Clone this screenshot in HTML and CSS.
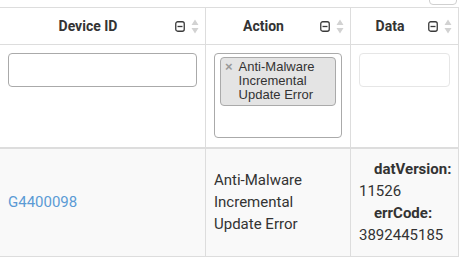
FILE: index.html
```html
<!DOCTYPE html>
<html lang="en">
<head>
  <meta charset="UTF-8">
  <title>Device events</title>
  <link rel="stylesheet" href="styles.css">
</head>
<body>
  <div class="toolbar">
    <button class="tool-btn" type="button"></button>
  </div>
  <table class="grid">
    <colgroup>
      <col class="col-device">
      <col class="col-action">
      <col class="col-data">
    </colgroup>
    <thead>
      <tr class="head-row">
        <th>
          <div class="head-cell">
            <span class="label">Device ID</span>
            <span class="tools">
              <svg class="collapse" width="10" height="11" viewBox="0 0 10 11"><rect x="0.75" y="0.75" width="8.5" height="9.5" rx="2" fill="none" stroke="#3a3a3a" stroke-width="1.3"/><line x1="2.5" y1="5.5" x2="7.5" y2="5.5" stroke="#3a3a3a" stroke-width="1.3"/></svg>
              <svg class="sort" width="8" height="15" viewBox="0 0 8 15"><path d="M4 0.5 L7.5 6 L0.5 6 Z M4 14.5 L7.5 9 L0.5 9 Z" fill="#d2d2d2"/></svg>
            </span>
          </div>
        </th>
        <th>
          <div class="head-cell">
            <span class="label">Action</span>
            <span class="tools">
              <svg class="collapse" width="10" height="11" viewBox="0 0 10 11"><rect x="0.75" y="0.75" width="8.5" height="9.5" rx="2" fill="none" stroke="#3a3a3a" stroke-width="1.3"/><line x1="2.5" y1="5.5" x2="7.5" y2="5.5" stroke="#3a3a3a" stroke-width="1.3"/></svg>
              <svg class="sort" width="8" height="15" viewBox="0 0 8 15"><path d="M4 0.5 L7.5 6 L0.5 6 Z M4 14.5 L7.5 9 L0.5 9 Z" fill="#d2d2d2"/></svg>
            </span>
          </div>
        </th>
        <th>
          <div class="head-cell">
            <span class="label">Data</span>
            <span class="tools">
              <svg class="collapse" width="10" height="11" viewBox="0 0 10 11"><rect x="0.75" y="0.75" width="8.5" height="9.5" rx="2" fill="none" stroke="#3a3a3a" stroke-width="1.3"/><line x1="2.5" y1="5.5" x2="7.5" y2="5.5" stroke="#3a3a3a" stroke-width="1.3"/></svg>
              <svg class="sort" width="8" height="15" viewBox="0 0 8 15"><path d="M4 0.5 L7.5 6 L0.5 6 Z M4 14.5 L7.5 9 L0.5 9 Z" fill="#d2d2d2"/></svg>
            </span>
          </div>
        </th>
      </tr>
      <tr class="filter-row">
        <td><input class="filter-input" type="text"></td>
        <td>
          <div class="multi-select">
            <span class="tag"><span class="tag-x">×</span><span class="tag-text">Anti-Malware Incremental Update Error</span></span>
          </div>
        </td>
        <td><input class="filter-input disabled" type="text" disabled></td>
      </tr>
    </thead>
    <tbody>
      <tr class="data-row">
        <td><a class="device-link" href="#">G4400098</a></td>
        <td class="action-text">Anti-Malware<br>Incremental<br>Update Error</td>
        <td>
          <dl class="kv">
            <dt>datVersion:</dt>
            <dd>11526</dd>
            <dt>errCode:</dt>
            <dd>3892445185</dd>
          </dl>
        </td>
      </tr>
    </tbody>
  </table>
</body>
</html>
```

FILE: styles.css
```css
html, body {
  margin: 0;
  padding: 0;
  background: #fff;
  overflow: hidden;
  font-family: Roboto, "Liberation Sans", sans-serif;
  color: #333;
}
.toolbar {
  display: flex;
  justify-content: flex-end;
  align-items: flex-end;
  height: 7px;
  overflow: hidden;
  padding-right: 7px;
}
.tool-btn {
  width: 28px;
  height: 20px;
  margin-bottom: 2px;
  border: 1px solid #d0d0d0;
  border-radius: 4px;
  background: #fff;
  padding: 0;
}
.grid {
  border-collapse: collapse;
  table-layout: fixed;
  width: 459px;
  margin-left: -1px;
}
.col-device { width: 206px; }
.col-action { width: 145px; }
.col-data { width: 108px; }
.grid th,
.grid td {
  border: 1px solid #ddd;
  padding: 0 8px;
}
.head-row th {
  height: 36px;
  padding: 0 6px 0 8px;
  font-size: 14px;
  font-weight: bold;
  color: #333;
}
.head-cell {
  display: flex;
  align-items: center;
}
.head-cell .label {
  flex: 1;
  text-align: center;
  margin-right: 7px;
}
.tools {
  display: flex;
  align-items: center;
  gap: 6px;
}
.tools svg {
  display: block;
}
.filter-row td {
  vertical-align: top;
  padding-top: 8px;
  padding-bottom: 9px;
  border-bottom: 2px solid #ddd;
}
.filter-input {
  display: block;
  box-sizing: border-box;
  width: 100%;
  height: 34px;
  border: 1px solid #aaa;
  border-radius: 4px;
  background: #fff;
  margin: 0;
}
.filter-input.disabled {
  border-color: #e6e6e6;
}
.multi-select {
  box-sizing: border-box;
  height: 85px;
  border: 1px solid #aaa;
  border-radius: 4px;
  padding: 3px 5px;
  font-family: "Liberation Sans", Arial, sans-serif;
  font-size: 13px;
}
.tag {
  display: flex;
  align-items: flex-start;
  background: #e4e4e4;
  border: 1px solid #aaa;
  border-radius: 4px;
  padding: 2px 4px 3px 4px;
  line-height: 14px;
  color: #333;
}
.tag-x {
  color: #999;
  font-weight: bold;
  font-size: 13px;
  margin-right: 6px;
}
.data-row td {
  background: #f9f9f9;
  vertical-align: middle;
  font-size: 15px;
  line-height: 22px;
  padding-top: 9px;
  padding-bottom: 10px;
}
.device-link {
  color: #5b9bd5;
  text-decoration: none;
}
.action-text {
  color: #333;
}
.kv {
  margin: 0;
}
.kv dt {
  font-weight: bold;
  padding-left: 15px;
  color: #333;
}
.kv dd {
  margin: 0;
  color: #333;
}
```
